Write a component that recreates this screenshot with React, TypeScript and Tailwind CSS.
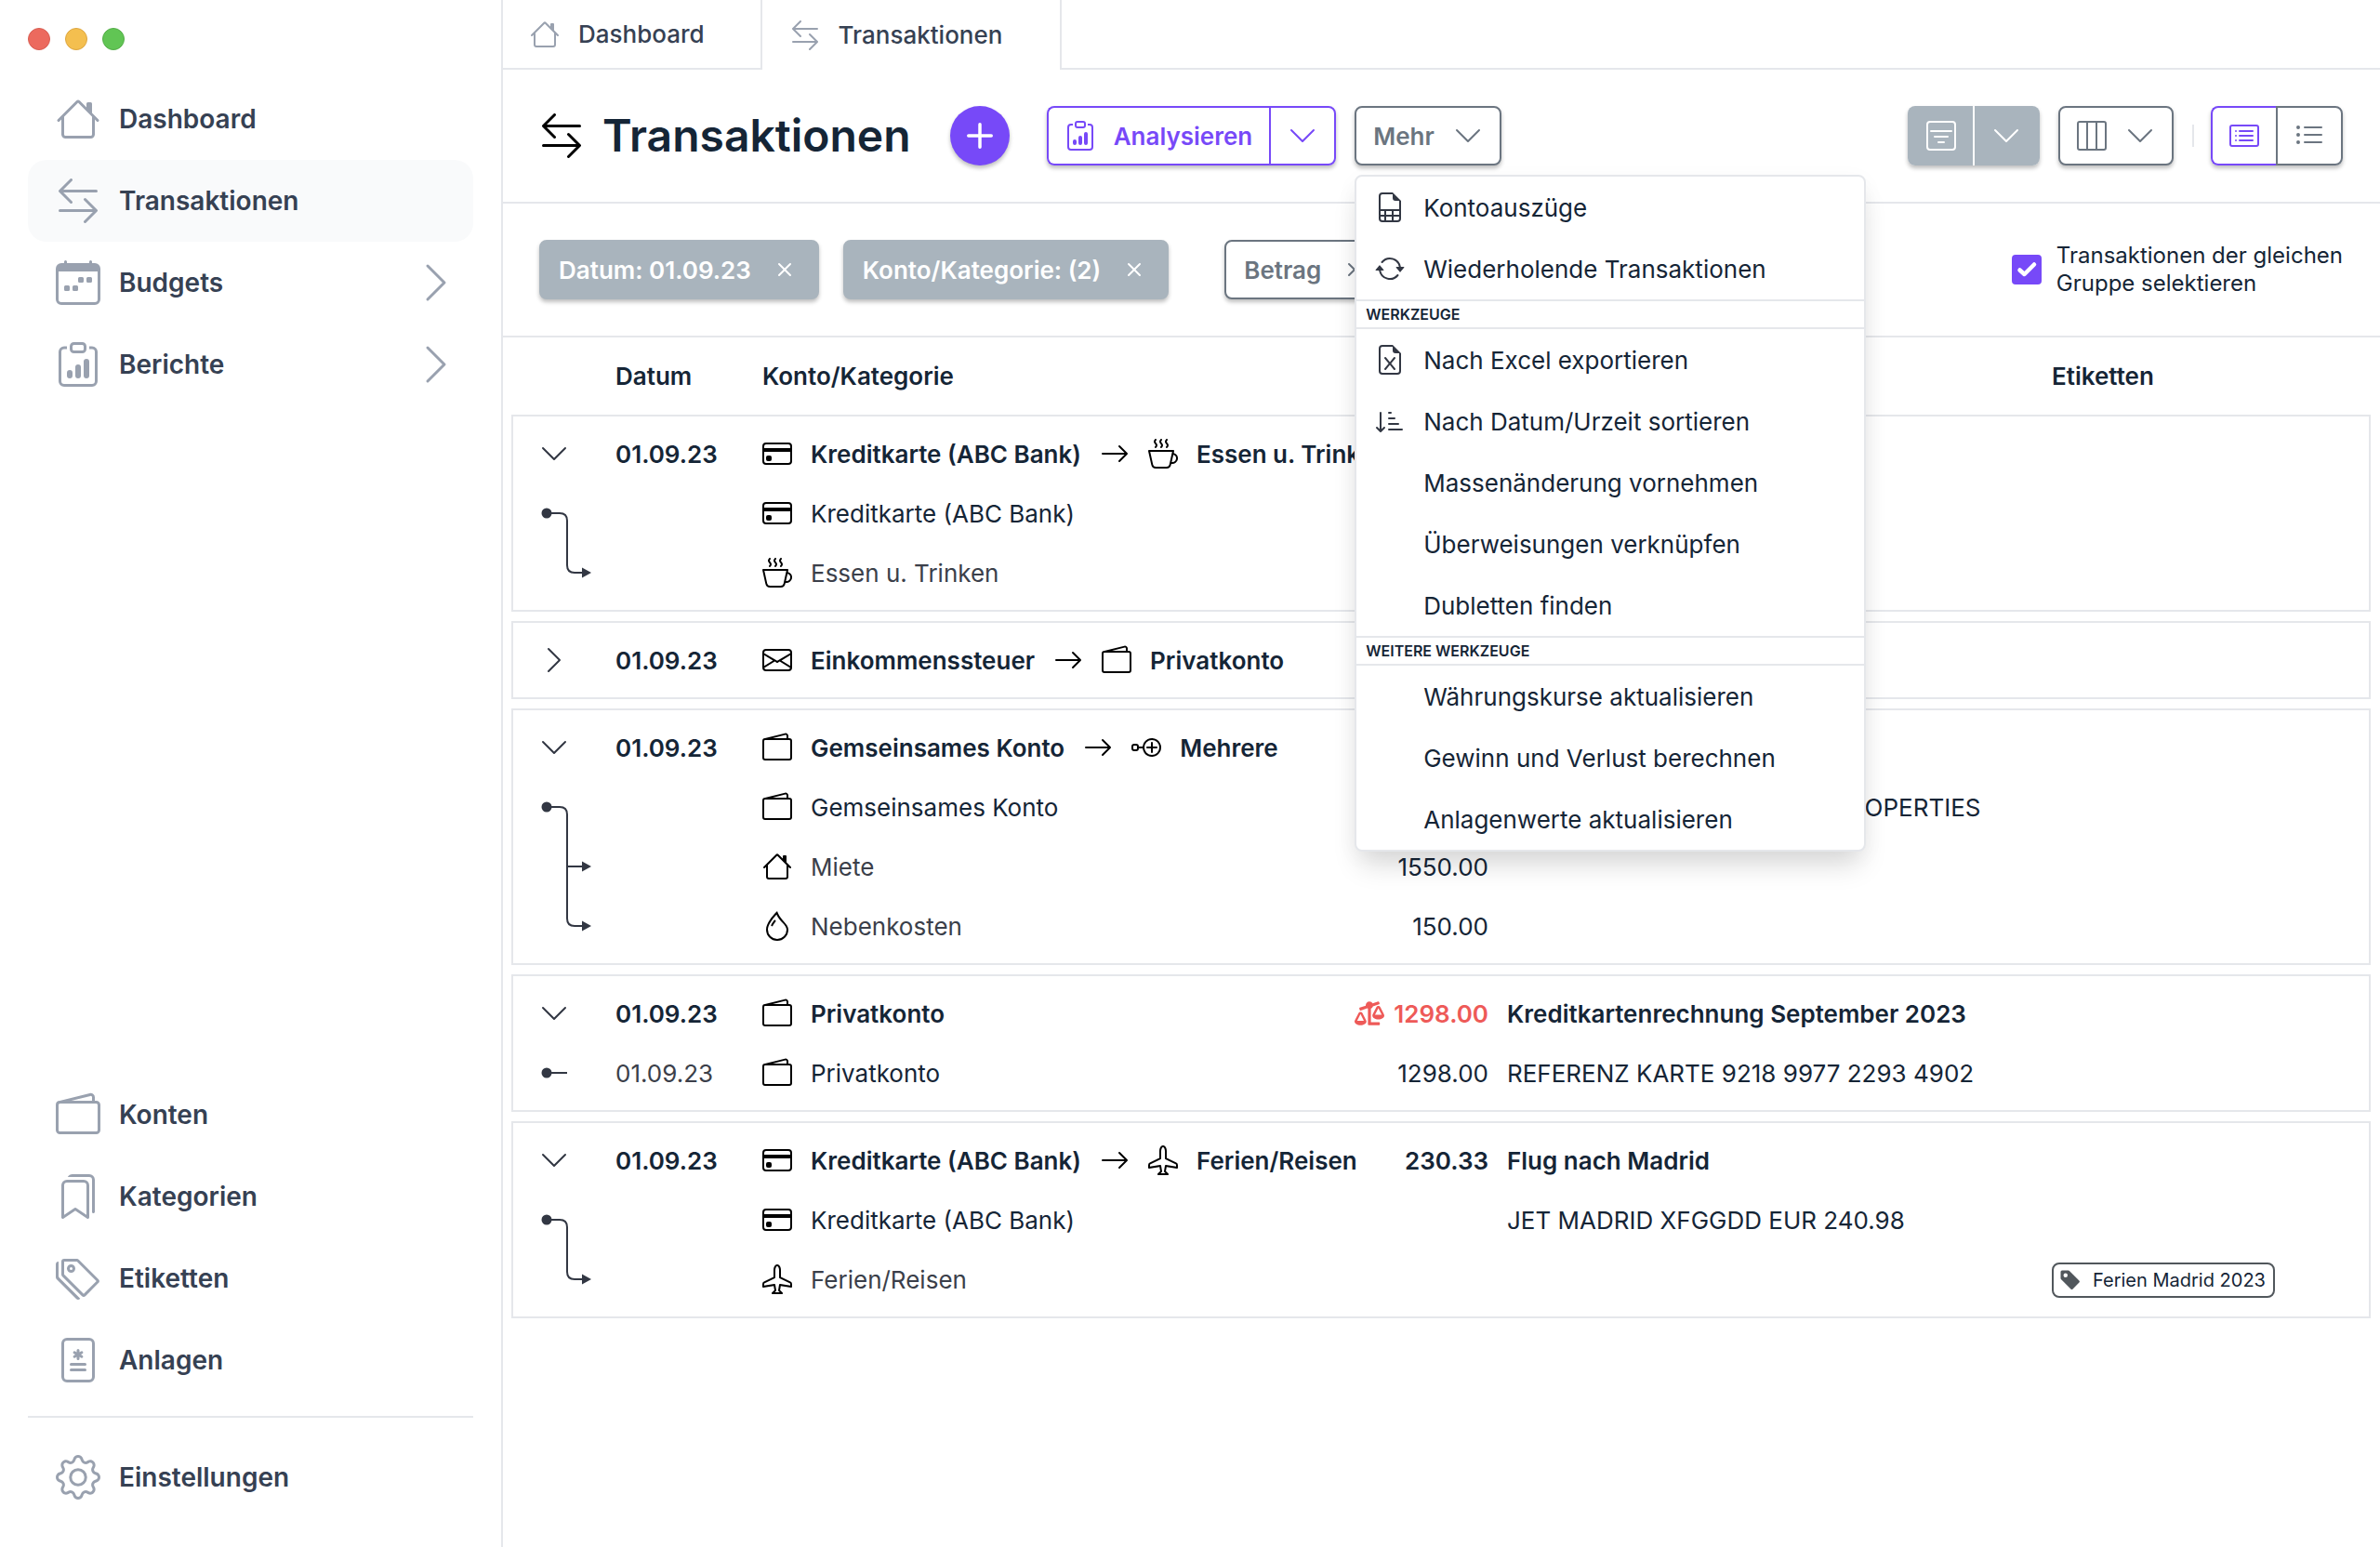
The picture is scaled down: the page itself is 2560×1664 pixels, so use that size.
import React, { useState } from 'react';
import type { IconType } from 'react-icons';
import {
  BsAirplane,
  BsArrowLeftRight,
  BsArrowRepeat,
  BsArrowRight,
  BsBookmarks,
  BsCalendarWeek,
  BsCardList,
  BsChevronDown,
  BsChevronRight,
  BsClipboardData,
  BsCreditCard,
  BsCupHot,
  BsDroplet,
  BsEnvelope,
  BsFileEarmarkExcel,
  BsFileEarmarkSpreadsheet,
  BsFileMedical,
  BsFilterSquare,
  BsGear,
  BsHouse,
  BsLayoutThreeColumns,
  BsListUl,
  BsNodePlus,
  BsPlus,
  BsSortDownAlt,
  BsTagFill,
  BsTags,
  BsWallet2,
  BsX,
} from 'react-icons/bs';
import { FaBalanceScaleLeft } from 'react-icons/fa';

interface NavEntry {
  label: string;
  icon: IconType;
  active?: boolean;
  expandable?: boolean;
}

interface Account {
  name: string;
  icon: IconType;
}

type LinkKind = 'start' | 'branch' | 'end' | 'single';

interface Booking {
  link: LinkKind;
  account: Account;
  category?: boolean;
  date?: string;
  amount?: string;
  text?: string;
  tag?: string;
}

interface Transaction {
  date: string;
  from: Account;
  to?: Account;
  amount?: string;
  unbalanced?: boolean;
  text?: string;
  bookings: Booking[];
}

const mainNav: NavEntry[] = [
  { label: 'Dashboard', icon: BsHouse },
  { label: 'Transaktionen', icon: BsArrowLeftRight, active: true },
  { label: 'Budgets', icon: BsCalendarWeek, expandable: true },
  { label: 'Berichte', icon: BsClipboardData, expandable: true },
];

const dataNav: NavEntry[] = [
  { label: 'Konten', icon: BsWallet2 },
  { label: 'Kategorien', icon: BsBookmarks },
  { label: 'Etiketten', icon: BsTags },
  { label: 'Anlagen', icon: BsFileMedical },
];

const menuSections: { title?: string; items: { label: string; icon?: IconType }[] }[] = [
  {
    items: [
      { label: 'Kontoauszüge', icon: BsFileEarmarkSpreadsheet },
      { label: 'Wiederholende Transaktionen', icon: BsArrowRepeat },
    ],
  },
  {
    title: 'Werkzeuge',
    items: [
      { label: 'Nach Excel exportieren', icon: BsFileEarmarkExcel },
      { label: 'Nach Datum/Urzeit sortieren', icon: BsSortDownAlt },
      { label: 'Massenänderung vornehmen' },
      { label: 'Überweisungen verknüpfen' },
      { label: 'Dubletten finden' },
    ],
  },
  {
    title: 'Weitere Werkzeuge',
    items: [
      { label: 'Währungskurse aktualisieren' },
      { label: 'Gewinn und Verlust berechnen' },
      { label: 'Anlagenwerte aktualisieren' },
    ],
  },
];

const creditCard: Account = { name: 'Kreditkarte (ABC Bank)', icon: BsCreditCard };
const privateAccount: Account = { name: 'Privatkonto', icon: BsWallet2 };
const jointAccount: Account = { name: 'Gemseinsames Konto', icon: BsWallet2 };
const travel: Account = { name: 'Ferien/Reisen', icon: BsAirplane };
const food: Account = { name: 'Essen u. Trinken', icon: BsCupHot };

const transactions: Transaction[] = [
  {
    date: '01.09.23',
    from: creditCard,
    to: food,
    bookings: [
      { link: 'start', account: creditCard },
      { link: 'end', account: food, category: true },
    ],
  },
  {
    date: '01.09.23',
    from: { name: 'Einkommenssteuer', icon: BsEnvelope },
    to: privateAccount,
    bookings: [],
  },
  {
    date: '01.09.23',
    from: jointAccount,
    to: { name: 'Mehrere', icon: BsNodePlus },
    bookings: [
      { link: 'start', account: jointAccount, text: 'DAUERAUFTRAG AN SWISS PROPERTIES' },
      { link: 'branch', account: { name: 'Miete', icon: BsHouse }, category: true, amount: '1550.00' },
      { link: 'end', account: { name: 'Nebenkosten', icon: BsDroplet }, category: true, amount: '150.00' },
    ],
  },
  {
    date: '01.09.23',
    from: privateAccount,
    amount: '1298.00',
    unbalanced: true,
    text: 'Kreditkartenrechnung September 2023',
    bookings: [
      {
        link: 'single',
        account: privateAccount,
        date: '01.09.23',
        amount: '1298.00',
        text: 'REFERENZ KARTE 9218 9977 2293 4902',
      },
    ],
  },
  {
    date: '01.09.23',
    from: creditCard,
    to: travel,
    amount: '230.33',
    text: 'Flug nach Madrid',
    bookings: [
      { link: 'start', account: creditCard, text: 'JET MADRID XFGGDD EUR 240.98' },
      { link: 'end', account: travel, category: true, tag: 'Ferien Madrid 2023' },
    ],
  },
];

const rowGrid =
  'grid grid-cols-[110px_158px_minmax(0,631fr)_150px_minmax(0,606fr)_minmax(0,341fr)] items-center whitespace-nowrap';

function NavItem({ entry }: { entry: NavEntry }) {
  const Icon = entry.icon;
  return (
    <a
      href="#"
      className={`flex h-[88px] items-center gap-5 rounded-[20px] pl-[30px] pr-4 text-[28px] font-semibold text-gray-700 ${
        entry.active ? 'bg-gray-50' : ''
      }`}
    >
      <Icon className="size-12 text-gray-400" />
      <span className="flex-1">{entry.label}</span>
      {entry.expandable && <BsChevronRight className="size-12 text-gray-400" />}
    </a>
  );
}

function Sidebar() {
  return (
    <aside className="flex w-[541px] shrink-0 flex-col border-r-2 border-gray-200 px-[30px] pt-[30px] pb-[31px]">
      <div className="flex gap-4">
        <span className="size-6 rounded-full border border-[#d85e53] bg-[#ec6a5e]" />
        <span className="size-6 rounded-full border border-[#dda640] bg-[#f4bf4f]" />
        <span className="size-6 rounded-full border border-[#54ae48] bg-[#61c554]" />
      </div>
      <nav className="mt-[30px] flex flex-1 flex-col">
        {mainNav.map((entry) => (
          <NavItem key={entry.label} entry={entry} />
        ))}
        <div className="mt-auto mb-5 border-b-2 border-gray-200 pb-4">
          {dataNav.map((entry) => (
            <NavItem key={entry.label} entry={entry} />
          ))}
        </div>
        <NavItem entry={{ label: 'Einstellungen', icon: BsGear }} />
      </nav>
    </aside>
  );
}

function TabBar() {
  return (
    <div className="flex h-[75px] text-[26px] font-medium text-gray-700">
      <a href="#" className="flex items-center gap-5 border-r-2 border-b-2 border-gray-200 pr-[60px] pl-[29px]">
        <BsHouse className="size-8 text-gray-400" />
        Dashboard
      </a>
      <a href="#" className="flex items-center gap-5 border-r-2 border-gray-200 pr-[62px] pl-[30px]">
        <BsArrowLeftRight className="size-8 text-gray-400" />
        Transaktionen
      </a>
      <div className="flex-1 border-b-2 border-gray-200" />
    </div>
  );
}

function MoreMenu() {
  return (
    <div
      role="menu"
      className="absolute top-full left-0 z-10 mt-[10px] w-[550px] overflow-hidden rounded-lg border-2 border-gray-200 bg-white text-[26px] font-normal text-[#152536] shadow-[0_20px_30px_-6px_rgba(0,0,0,0.14),0_6px_24px_rgba(0,0,0,0.04)]"
    >
      {menuSections.map((section, i) => (
        <div key={i}>
          {section.title && (
            <div className="flex h-8 items-center border-y-2 border-gray-200 pl-[10px] text-base font-semibold uppercase">
              {section.title}
            </div>
          )}
          {section.items.map(({ label, icon: Icon }) => (
            <button key={label} type="button" role="menuitem" className="flex h-[66px] w-full items-center gap-5 px-5">
              {Icon ? <Icon className="size-8 text-[#323743]" /> : <span className="size-8" />}
              {label}
            </button>
          ))}
        </div>
      ))}
    </div>
  );
}

function Toolbar() {
  const [menuOpen, setMenuOpen] = useState(true);

  return (
    <header className="flex h-36 items-center border-b-2 border-gray-200 pr-10 pl-[39px] text-[26px] font-semibold">
      <BsArrowLeftRight className="size-12 text-black" />
      <h1 className="ml-5 text-5xl font-semibold text-[#152536]">Transaktionen</h1>
      <button
        type="button"
        aria-label="Neue Transaktion"
        className="ml-[42px] flex size-16 items-center justify-center rounded-full bg-[#7749f8] text-white shadow-[0_3px_4px_rgba(0,0,0,0.25)]"
      >
        <BsPlus className="size-14" />
      </button>

      <div className="ml-10 flex h-16 rounded-lg text-[#7749f8] shadow-[0_3px_4px_rgba(0,0,0,0.25)]">
        <button
          type="button"
          className="flex items-center gap-5 rounded-l-lg border-2 border-r-0 border-[#7749f8] bg-white px-[18px]"
        >
          <BsClipboardData className="size-8" />
          Analysieren
        </button>
        <button
          type="button"
          aria-label="Analyse wählen"
          className="flex items-center rounded-r-lg border-2 border-[#7749f8] bg-white px-[18px]"
        >
          <BsChevronDown className="size-8" />
        </button>
      </div>

      <div className="relative ml-5">
        <button
          type="button"
          aria-expanded={menuOpen}
          onClick={() => setMenuOpen(!menuOpen)}
          className="flex h-16 items-center gap-5 rounded-lg border-2 border-[#6b7580] bg-white px-[18px] text-[#6b7580] shadow-[0_3px_4px_rgba(0,0,0,0.25)]"
        >
          Mehr
          <BsChevronDown className="size-8" />
        </button>
        {menuOpen && <MoreMenu />}
      </div>

      <div className="ml-auto flex items-center gap-5 text-[#6b7580]">
        <div className="flex h-16 rounded-lg text-white shadow-[0_3px_4px_rgba(0,0,0,0.25)]">
          <button type="button" aria-label="Filter" className="rounded-l-lg bg-[#a9b4bd] pr-[18px] pl-5">
            <BsFilterSquare className="size-8" />
          </button>
          <button
            type="button"
            aria-label="Filter wählen"
            className="rounded-r-lg border-l-2 border-white bg-[#a9b4bd] pr-5 pl-[18px]"
          >
            <BsChevronDown className="size-8" />
          </button>
        </div>
        <button
          type="button"
          aria-label="Spalten"
          className="flex h-16 items-center gap-5 rounded-lg border-2 border-[#6b7580] bg-white px-[18px] shadow-[0_3px_4px_rgba(0,0,0,0.25)]"
        >
          <BsLayoutThreeColumns className="size-8" />
          <BsChevronDown className="size-8" />
        </button>
        <div className="flex items-center gap-[18px]">
          <span className="h-6 w-0.5 bg-gray-200" />
          <div className="flex h-16 rounded-lg shadow-[0_3px_4px_rgba(0,0,0,0.25)]">
            <button
              type="button"
              aria-label="Detailansicht"
              className="rounded-l-lg border-2 border-r-0 border-[#7749f8] bg-white px-[18px] text-[#7749f8]"
            >
              <BsCardList className="size-8" />
            </button>
            <button
              type="button"
              aria-label="Listenansicht"
              className="rounded-r-lg border-2 border-[#6b7580] bg-white px-[18px]"
            >
              <BsListUl className="size-8" />
            </button>
          </div>
        </div>
      </div>
    </header>
  );
}

function FilterChip({ label, filled }: { label: string; filled?: boolean }) {
  return (
    <div
      className={`flex h-16 items-center gap-5 rounded-lg border-2 px-[19px] shadow-[0_3px_4px_rgba(0,0,0,0.25)] ${
        filled ? 'border-[#a9b4bd] bg-[#a9b4bd] text-white' : 'border-[#6b7580] bg-white text-[#6b7580]'
      }`}
    >
      <button type="button">{label}</button>
      <button type="button" aria-label={`${label} entfernen`}>
        <BsX className="size-8" />
      </button>
    </div>
  );
}

function FilterBar() {
  const [selectGroup, setSelectGroup] = useState(true);

  return (
    <div className="flex h-36 items-center border-b-2 border-gray-200 pr-10 pl-[39px] text-[26px] font-semibold">
      <div className="flex gap-[26px]">
        <FilterChip label="Datum: 01.09.23" filled />
        <FilterChip label="Konto/Kategorie: (2)" filled />
      </div>
      <div className="ml-[60px]">
        <FilterChip label="Betrag" />
      </div>
      <label className="ml-auto flex items-center gap-4 text-2xl/[30px] font-normal text-[#152536]">
        <span className="relative size-8">
          <input
            type="checkbox"
            checked={selectGroup}
            onChange={(e) => setSelectGroup(e.target.checked)}
            className="block size-8 appearance-none rounded border-2 border-[#7749f8] checked:bg-[#7749f8]"
          />
          <svg viewBox="0 0 32 32" className="pointer-events-none absolute inset-0" aria-hidden="true">
            <path
              d="M8.5 16.5 13.5 21 24 10.5"
              fill="none"
              stroke="white"
              strokeWidth="4.5"
              strokeLinecap="round"
              strokeLinejoin="round"
            />
          </svg>
        </span>
        <span>
          Transaktionen der gleichen
          <br />
          Gruppe selektieren
        </span>
      </label>
    </div>
  );
}

// One piece of the tree line per row, the pieces join up over the row edges
function LinkLine({ kind }: { kind: LinkKind }) {
  return (
    <svg viewBox="0 0 96 64" className="h-16 w-24 text-[#323743]" fill="none" stroke="currentColor" strokeWidth="2">
      {(kind === 'start' || kind === 'single') && (
        <circle cx="36" cy="32" r="5.5" fill="currentColor" stroke="none" />
      )}
      {kind === 'single' && <path d="M36 32H58" />}
      {kind === 'start' && <path d="M36 32H50Q58 32 58 40V64" />}
      {kind === 'branch' && <path d="M58 0V64M58 32H75" />}
      {kind === 'end' && <path d="M58 0V24Q58 32 66 32H75" />}
      {(kind === 'branch' || kind === 'end') && (
        <path d="M74 26.5 84 32 74 37.5Z" fill="currentColor" stroke="none" />
      )}
    </svg>
  );
}

function AccountLabel({ account }: { account: Account }) {
  const Icon = account.icon;
  return (
    <>
      <Icon className="size-8 shrink-0 text-black" />
      <span>{account.name}</span>
    </>
  );
}

function TransactionGroup({ transaction }: { transaction: Transaction }) {
  const { date, from, to, amount, unbalanced, text, bookings } = transaction;
  const open = bookings.length > 0;

  return (
    <tbody className="mb-[10px] block border-2 border-gray-200 py-2">
      <tr className={`${rowGrid} h-16 font-semibold`}>
        <td className="pl-7">
          <button type="button" aria-label="Details" aria-expanded={open} className="block text-[#323743]">
            {open ? <BsChevronDown className="size-8" /> : <BsChevronRight className="size-8" />}
          </button>
        </td>
        <td>{date}</td>
        <td className="flex items-center gap-5">
          <AccountLabel account={from} />
          {to && (
            <>
              <BsArrowRight className="size-8 shrink-0 text-black" />
              <AccountLabel account={to} />
            </>
          )}
        </td>
        <td className={`flex items-center justify-end gap-[10px] ${unbalanced ? 'text-[#ee5a58]' : ''}`}>
          {unbalanced && <FaBalanceScaleLeft className="size-8 shrink-0" />}
          {amount}
        </td>
        <td className="pl-5">{text}</td>
        <td />
      </tr>
      {bookings.map((booking) => (
        <tr key={booking.account.name} className={`${rowGrid} h-16`}>
          <td>
            <LinkLine kind={booking.link} />
          </td>
          <td className="text-[#3b3f4a]">{booking.date}</td>
          <td className={`flex items-center gap-5 ${booking.category ? 'text-[#3b3f4a]' : ''}`}>
            <AccountLabel account={booking.account} />
          </td>
          <td className="text-right">{booking.amount}</td>
          <td className="pl-5">{booking.text}</td>
          <td>
            {booking.tag && (
              <span className="inline-flex h-[38px] items-center gap-3 rounded-lg border-2 border-[#51575c] pr-2 pl-1.5 align-middle text-xl">
                <BsTagFill className="size-6 text-[#51575c]" />
                {booking.tag}
              </span>
            )}
          </td>
        </tr>
      ))}
    </tbody>
  );
}

export default function App() {
  return (
    <div className="flex min-h-screen bg-white font-['Inter',sans-serif]">
      <Sidebar />
      <main className="min-w-0 flex-1">
        <TabBar />
        <Toolbar />
        <FilterBar />
        <table className="mr-[10px] ml-[9px] block text-[26px] text-[#152536]">
          <thead className="block border-x-2 border-transparent">
            <tr className={`${rowGrid} h-[83px] text-left`}>
              <th />
              <th className="font-semibold">Datum</th>
              <th className="font-semibold">Konto/Kategorie</th>
              <th aria-label="Betrag" />
              <th aria-label="Beschreibung" />
              <th className="font-semibold">Etiketten</th>
            </tr>
          </thead>
          {transactions.map((transaction, i) => (
            <TransactionGroup key={i} transaction={transaction} />
          ))}
        </table>
      </main>
    </div>
  );
}
